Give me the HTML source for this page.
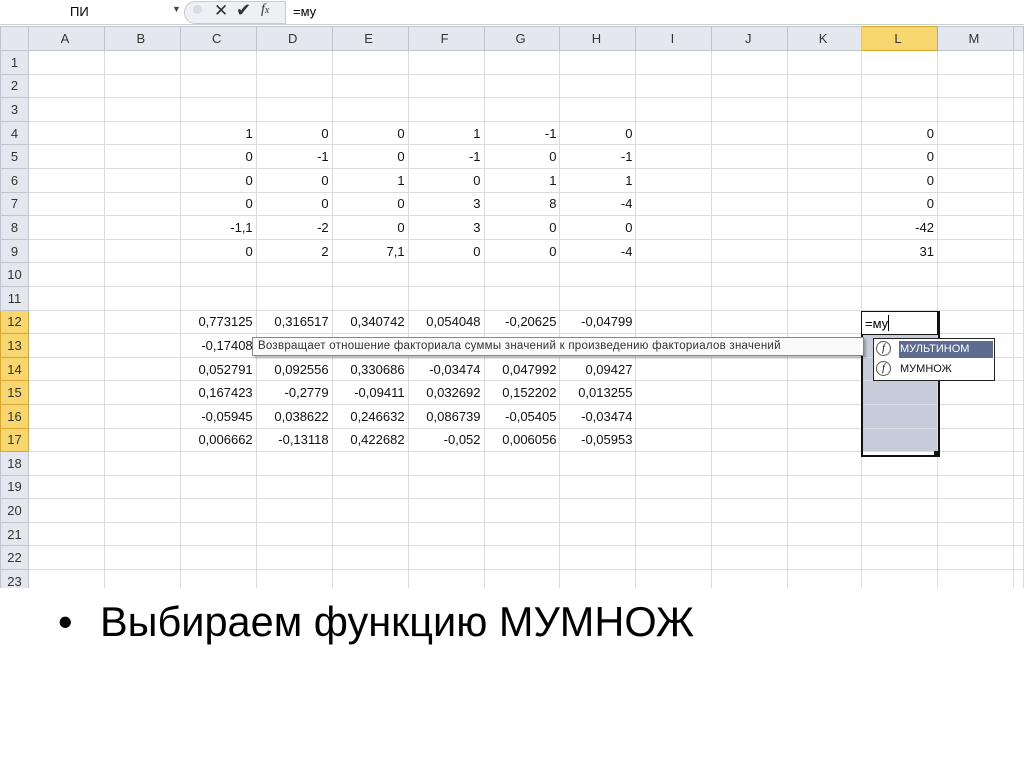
<!DOCTYPE html>
<html><head><meta charset="utf-8"><style>
body{margin:0;width:1024px;height:767px;background:#fff;position:relative;overflow:hidden;font-family:"Liberation Sans","Noto Sans CJK SC",sans-serif}
#fb{position:absolute;left:0;top:0;width:1024px;height:24px;background:#fff;border-bottom:1px solid #c9ced6}
#grid{position:absolute;left:0;top:26px;width:1024px;height:562px;overflow:hidden}
table{border-collapse:collapse;table-layout:fixed}
td{border:1px solid #d9dce1;height:22.6px;padding:0 3px 0 0;font-size:13px;text-align:right;color:#111;white-space:nowrap;overflow:hidden}
tr.h td{height:23px;background:#e4e8ee;text-align:center;color:#333;border-color:#c0c6cf;font-size:13px}
td.r{background:#e4e8ee;text-align:center;color:#333;border-color:#c0c6cf;padding:0}
td.hl{background:#f7d66f !important;border-color:#d8a832 !important}
</style></head><body>
<div id="fb">
 <div style="position:absolute;left:70px;top:4px;font-size:13px">ПИ</div>
 <div style="position:absolute;left:172px;top:4px;font-size:9px;color:#444">▼</div>
 <div style="position:absolute;left:184px;top:1px;width:100px;height:21px;background:#eef0f3;border:1px solid #c7ccd3;border-radius:11px 0 0 11px"></div>
 <div style="position:absolute;left:193px;top:5px;width:9px;height:9px;border-radius:50%;background:#d8dce2"></div>
 <div style="position:absolute;left:214px;top:1px;font-size:17px;color:#333">✕</div>
 <div style="position:absolute;left:236px;top:0px;font-size:18px;color:#333">✔</div>
 <div style="position:absolute;left:261px;top:2px;font-size:14px;font-style:italic;font-family:'Liberation Serif',serif;color:#333">f<span style="font-size:10px">x</span></div>
 <div style="position:absolute;left:293px;top:4px;font-size:13px">=му</div>
</div>
<div id="grid">
<table>
<colgroup><col style="width:28px"><col style="width:76px"><col style="width:76px"><col style="width:76px"><col style="width:76px"><col style="width:76px"><col style="width:76px"><col style="width:76px"><col style="width:76px"><col style="width:76px"><col style="width:76px"><col style="width:74px"><col style="width:76px"><col style="width:76px"><col style="width:10px"></colgroup>
<tr class="h"><td></td><td>A</td><td>B</td><td>C</td><td>D</td><td>E</td><td>F</td><td>G</td><td>H</td><td>I</td><td>J</td><td>K</td><td class="hl">L</td><td>M</td><td></td></tr>
<tr><td class="r">1</td><td></td><td></td><td></td><td></td><td></td><td></td><td></td><td></td><td></td><td></td><td></td><td></td><td></td><td></td></tr>
<tr><td class="r">2</td><td></td><td></td><td></td><td></td><td></td><td></td><td></td><td></td><td></td><td></td><td></td><td></td><td></td><td></td></tr>
<tr><td class="r">3</td><td></td><td></td><td></td><td></td><td></td><td></td><td></td><td></td><td></td><td></td><td></td><td></td><td></td><td></td></tr>
<tr><td class="r">4</td><td></td><td></td><td>1</td><td>0</td><td>0</td><td>1</td><td>-1</td><td>0</td><td></td><td></td><td></td><td>0</td><td></td><td></td></tr>
<tr><td class="r">5</td><td></td><td></td><td>0</td><td>-1</td><td>0</td><td>-1</td><td>0</td><td>-1</td><td></td><td></td><td></td><td>0</td><td></td><td></td></tr>
<tr><td class="r">6</td><td></td><td></td><td>0</td><td>0</td><td>1</td><td>0</td><td>1</td><td>1</td><td></td><td></td><td></td><td>0</td><td></td><td></td></tr>
<tr><td class="r">7</td><td></td><td></td><td>0</td><td>0</td><td>0</td><td>3</td><td>8</td><td>-4</td><td></td><td></td><td></td><td>0</td><td></td><td></td></tr>
<tr><td class="r">8</td><td></td><td></td><td>-1,1</td><td>-2</td><td>0</td><td>3</td><td>0</td><td>0</td><td></td><td></td><td></td><td>-42</td><td></td><td></td></tr>
<tr><td class="r">9</td><td></td><td></td><td>0</td><td>2</td><td>7,1</td><td>0</td><td>0</td><td>-4</td><td></td><td></td><td></td><td>31</td><td></td><td></td></tr>
<tr><td class="r">10</td><td></td><td></td><td></td><td></td><td></td><td></td><td></td><td></td><td></td><td></td><td></td><td></td><td></td><td></td></tr>
<tr><td class="r">11</td><td></td><td></td><td></td><td></td><td></td><td></td><td></td><td></td><td></td><td></td><td></td><td></td><td></td><td></td></tr>
<tr><td class="r hl">12</td><td></td><td></td><td>0,773125</td><td>0,316517</td><td>0,340742</td><td>0,054048</td><td>-0,20625</td><td>-0,04799</td><td></td><td></td><td></td><td></td><td></td><td></td></tr>
<tr><td class="r hl">13</td><td></td><td></td><td>-0,17408</td><td></td><td></td><td></td><td></td><td></td><td></td><td></td><td></td><td style="background:#c6ccd9"></td><td></td><td></td></tr>
<tr><td class="r hl">14</td><td></td><td></td><td>0,052791</td><td>0,092556</td><td>0,330686</td><td>-0,03474</td><td>0,047992</td><td>0,09427</td><td></td><td></td><td></td><td style="background:#c6ccd9"></td><td></td><td></td></tr>
<tr><td class="r hl">15</td><td></td><td></td><td>0,167423</td><td>-0,2779</td><td>-0,09411</td><td>0,032692</td><td>0,152202</td><td>0,013255</td><td></td><td></td><td></td><td style="background:#c6ccd9"></td><td></td><td></td></tr>
<tr><td class="r hl">16</td><td></td><td></td><td>-0,05945</td><td>0,038622</td><td>0,246632</td><td>0,086739</td><td>-0,05405</td><td>-0,03474</td><td></td><td></td><td></td><td style="background:#c6ccd9"></td><td></td><td></td></tr>
<tr><td class="r hl">17</td><td></td><td></td><td>0,006662</td><td>-0,13118</td><td>0,422682</td><td>-0,052</td><td>0,006056</td><td>-0,05953</td><td></td><td></td><td></td><td style="background:#c6ccd9"></td><td></td><td></td></tr>
<tr><td class="r">18</td><td></td><td></td><td></td><td></td><td></td><td></td><td></td><td></td><td></td><td></td><td></td><td></td><td></td><td></td></tr>
<tr><td class="r">19</td><td></td><td></td><td></td><td></td><td></td><td></td><td></td><td></td><td></td><td></td><td></td><td></td><td></td><td></td></tr>
<tr><td class="r">20</td><td></td><td></td><td></td><td></td><td></td><td></td><td></td><td></td><td></td><td></td><td></td><td></td><td></td><td></td></tr>
<tr><td class="r">21</td><td></td><td></td><td></td><td></td><td></td><td></td><td></td><td></td><td></td><td></td><td></td><td></td><td></td><td></td></tr>
<tr><td class="r">22</td><td></td><td></td><td></td><td></td><td></td><td></td><td></td><td></td><td></td><td></td><td></td><td></td><td></td><td></td></tr>
<tr><td class="r">23</td><td></td><td></td><td></td><td></td><td></td><td></td><td></td><td></td><td></td><td></td><td></td><td></td><td></td><td></td></tr>
</table>
</div>
<div style="position:absolute;left:861px;top:311px;width:75px;height:142px;border:2px solid #111"></div>
<div style="position:absolute;left:934px;top:451px;width:6px;height:6px;background:#111"></div>
<div style="position:absolute;left:861px;top:311px;width:77px;height:24px;background:#fff;border:1px solid #111;box-sizing:border-box;font-size:13px;padding:3px 0 0 3px">=му<span style="display:inline-block;width:1px;height:16px;background:#000;vertical-align:-3px"></span></div>
<div style="position:absolute;left:252px;top:337px;width:612px;height:19px;background:#fafafa;border:1px solid #888;box-sizing:border-box;box-shadow:2px 2px 2px rgba(0,0,0,.25);font-size:11.5px;color:#333;padding:2px 0 0 5px;letter-spacing:.25px;white-space:nowrap">Возвращает отношение факториала суммы значений к произведению факториалов значений</div>
<div style="position:absolute;left:873px;top:338px;width:122px;height:43px;background:#fff;border:1px solid #222;box-sizing:border-box;font-size:11px">
 <div style="position:absolute;left:2px;top:2px;width:15px;height:15px;border:1px solid #555;border-radius:50%;box-sizing:border-box;font-family:'Liberation Serif',serif;font-style:italic;font-size:10px;text-align:center;line-height:13px">f</div>
 <div style="position:absolute;left:25px;top:2px;width:94px;height:17px;background:#5c6b8f;color:#fff;padding:2px 0 0 1px;box-sizing:border-box">МУЛЬТИНОМ</div>
 <div style="position:absolute;left:2px;top:22px;width:15px;height:15px;border:1px solid #555;border-radius:50%;box-sizing:border-box;font-family:'Liberation Serif',serif;font-style:italic;font-size:10px;text-align:center;line-height:13px">f</div>
 <div style="position:absolute;left:26px;top:24px;color:#111">МУМНОЖ</div>
</div>
<div style="position:absolute;left:58px;top:598px;font-size:41.5px;color:#000">•</div>
<div style="position:absolute;left:100px;top:598px;font-size:41.5px;color:#000;white-space:nowrap">Выбираем функцию МУМНОЖ</div>
</body></html>
